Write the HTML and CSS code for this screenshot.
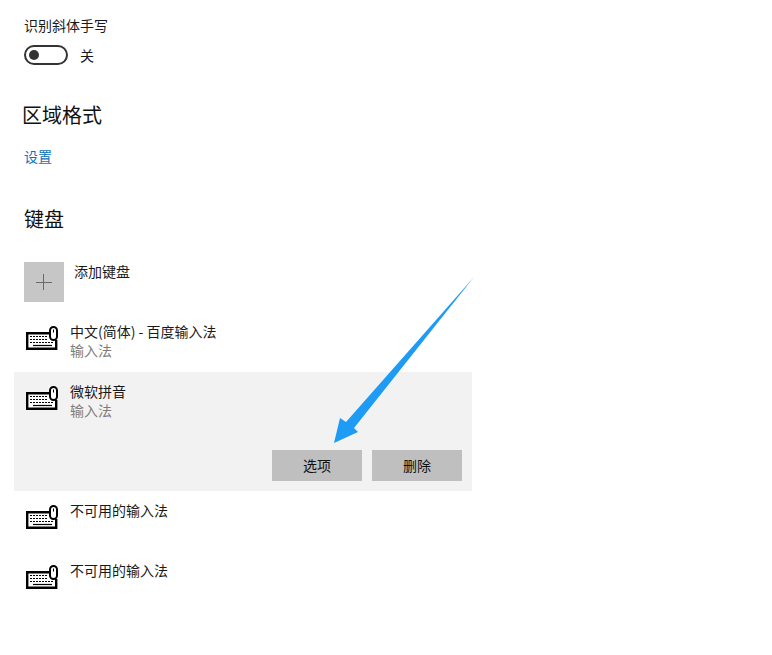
FILE: index.html
```html
<!DOCTYPE html>
<html lang="zh-CN">
<head>
<meta charset="utf-8">
<title>键盘</title>
<link rel="stylesheet" href="styles.css">
</head>
<body>
<svg width="0" height="0" class="defs">
  <symbol id="kb" viewBox="0 0 32 24">
    <path d="M24 7.2H1.2V22.8H30.2V14" fill="#fff" stroke="#000" stroke-width="2.4"/>
    <path d="M4 10.5h18M4 13.5h18" stroke="#000" stroke-width="1" stroke-dasharray="2 1"/>
    <path d="M4 16.5h24" stroke="#000" stroke-width="1" stroke-dasharray="2 1"/>
    <path d="M7 19.5h19" stroke="#000" stroke-width="1.2"/>
    <rect x="24" y="1" width="7" height="13" rx="3.5" fill="#fff" stroke="#000" stroke-width="2"/>
    <path d="M27.5 3.5v3" stroke="#000" stroke-width="1"/>
  </symbol>
</svg>
<main class="page">
  <section class="toggle-block">
    <div class="text">识别斜体手写</div>
    <div class="toggle-row">
      <span class="toggle"><span class="knob"></span></span>
      <span class="state">关</span>
    </div>
  </section>
  <h2 class="heading region">区域格式</h2>
  <a class="link" href="#">设置</a>
  <h2 class="heading keyboard">键盘</h2>
  <div class="add">
    <span class="tile"><svg width="16" height="16" viewBox="0 0 16 16"><path d="M7.5 0v16M0 8.5h16" stroke="#6a6a6a" stroke-width="1"/></svg></span>
    <span class="text">添加键盘</span>
  </div>
  <div class="list">
    <div class="row">
      <svg class="icon" width="32" height="24"><use href="#kb"/></svg>
      <div><div class="text">中文(简体) - 百度输入法</div><div class="sub">输入法</div></div>
    </div>
    <div class="row selected">
      <div class="row-main">
        <svg class="icon" width="32" height="24"><use href="#kb"/></svg>
        <div><div class="text">微软拼音</div><div class="sub">输入法</div></div>
      </div>
      <div class="actions">
        <button class="btn">选项</button>
        <button class="btn">删除</button>
      </div>
    </div>
    <div class="row">
      <svg class="icon" width="32" height="24"><use href="#kb"/></svg>
      <div class="text">不可用的输入法</div>
    </div>
    <div class="row">
      <svg class="icon" width="32" height="24"><use href="#kb"/></svg>
      <div class="text">不可用的输入法</div>
    </div>
  </div>
</main>
<svg class="arrow" width="772" height="655" viewBox="0 0 772 655">
  <polygon points="474,277 354,428 358,432 334,443 340,418 346,422" fill="#1e9bf5"/>
</svg>
</body>
</html>
```
FILE: styles.css
```css
html, body {
  margin: 0;
  padding: 0;
  background: #fff;
}
body {
  width: 772px;
  height: 655px;
  overflow: hidden;
  position: relative;
  font-family: "Noto Sans CJK SC", "Noto Sans", sans-serif;
  color: #111;
}
.defs { position: absolute; }
.page {
  padding: 16px 0 0 24px;
}
.text {
  font-size: 14px;
  line-height: 18px;
  padding-bottom: 2px;
  color: #1a1a1a;
}
.state {
  font-size: 14px;
  line-height: 20px;
  color: #1a1a1a;
}
.sub {
  font-size: 14px;
  line-height: 17px;
  padding-bottom: 2px;
  color: #7d7d7d;
}
.toggle-row {
  display: flex;
  align-items: center;
  gap: 12px;
  margin-top: 9px;
}
.toggle {
  box-sizing: border-box;
  width: 44px;
  height: 20px;
  border: 2px solid #333;
  border-radius: 10px;
  display: flex;
  align-items: center;
  padding-left: 3px;
}
.knob {
  width: 10px;
  height: 10px;
  border-radius: 50%;
  background: #333;
}
.heading {
  margin: 0;
  font-size: 20px;
  line-height: 30px;
  font-weight: 400;
  color: #111;
}
.region { margin: 35px 0 0 -2px; }
.link {
  display: block;
  margin-top: 17px;
  font-size: 14px;
  line-height: 18px;
  padding-bottom: 2px;
  color: #0b72b9;
  text-decoration: none;
}
.keyboard { margin-top: 37px; }
.add {
  display: flex;
  align-items: flex-start;
  gap: 10px;
  margin-top: 28px;
}
.tile {
  width: 40px;
  height: 40px;
  background: #c6c6c6;
  display: flex;
  align-items: center;
  justify-content: center;
}
.list {
  width: 458px;
  margin: 10px 0 0 -10px;
}
.row {
  box-sizing: border-box;
  display: flex;
  gap: 12px;
  height: 60px;
  padding: 10px 0 0 12px;
}
.icon {
  display: block;
  margin-top: 4px;
}
.selected {
  display: block;
  height: 119px;
  background: #f2f2f2;
}
.row-main {
  display: flex;
  gap: 12px;
}
.actions {
  display: flex;
  justify-content: flex-end;
  gap: 10px;
  margin: 29px 10px 0 0;
}
.btn {
  width: 90px;
  height: 31px;
  padding: 0 0 2px;
  border: 0;
  background: #bfbfbf;
  font: inherit;
  font-size: 14px;
  color: #111;
}
.arrow {
  position: absolute;
  left: 0;
  top: 0;
  pointer-events: none;
}
```
